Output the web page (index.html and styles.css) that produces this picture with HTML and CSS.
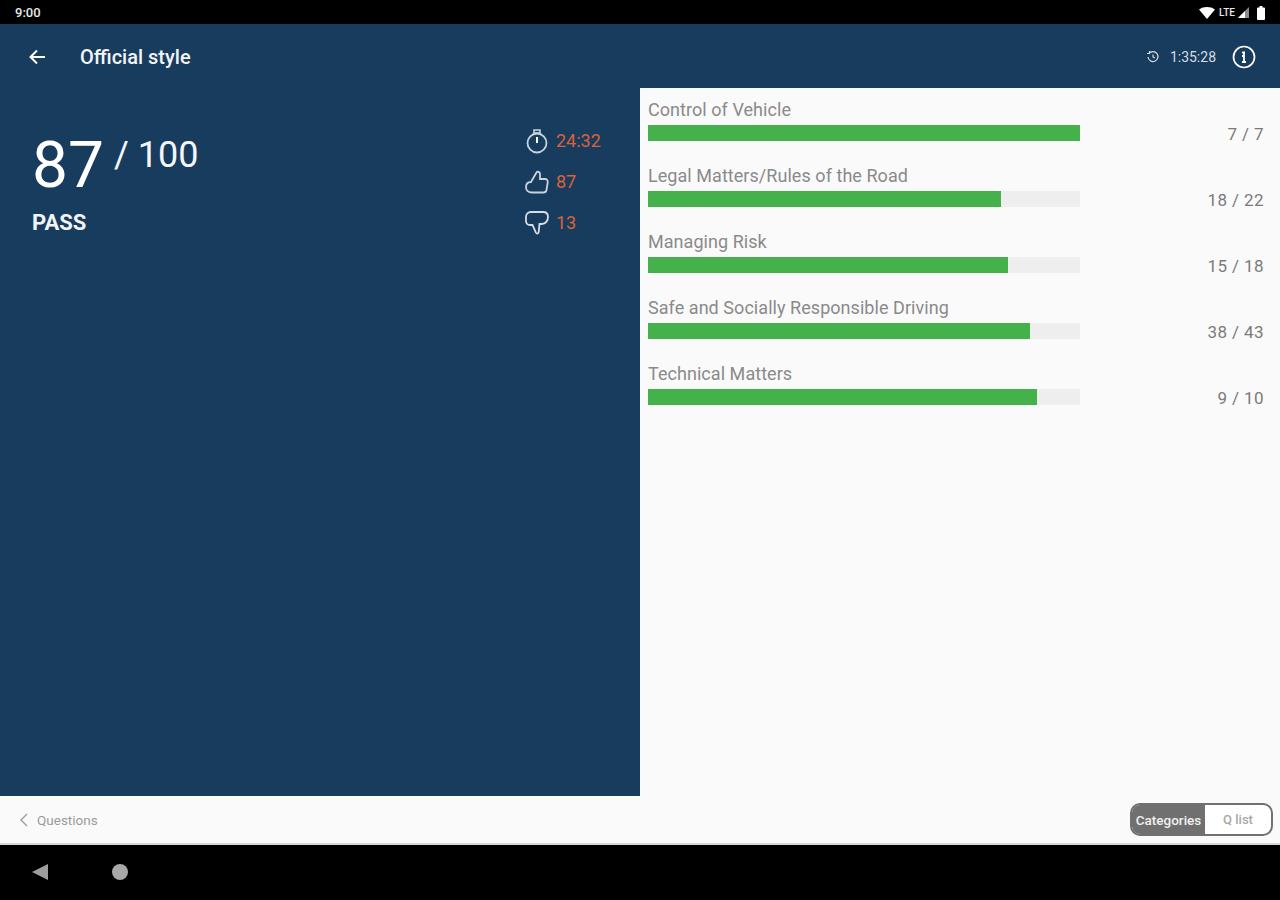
FILE: index.html
```html
<!DOCTYPE html>
<html lang="en">
<head>
<meta charset="utf-8">
<title>Official style</title>
<link rel="stylesheet" href="styles.css">
</head>
<body>
<div class="app">
  <div class="status">
    <span class="clock">9:00</span>
    <div class="status-icons">
      <svg class="wifi" width="16" height="12" viewBox="0 0 16 12"><path d="M0 2.500C4.500-.8 11.500-.8 16 2.500L8 12z" fill="#fff"/></svg>
      <span class="lte">LTE</span>
      <svg width="11" height="11" viewBox="0 0 11 11"><path d="M11 0V11H0z" fill="#fff" opacity=".55"/><path d="M7 4V11H0z" fill="#fff"/></svg>
      <svg class="batt" width="8" height="14" viewBox="0 0 8 14"><path d="M2.500 0h3v1.500H7a1 1 0 0 1 1 1V13a1 1 0 0 1-1 1H1a1 1 0 0 1-1-1V2.500a1 1 0 0 1 1-1h1.500z" fill="#fff"/></svg>
    </div>
  </div>
  <header class="topbar">
    <svg class="back" width="18" height="18" viewBox="0 0 18 18"><path d="M17 9H3M9 2.500 2.500 9 9 15.500" fill="none" stroke="#fff" stroke-width="2"/></svg>
    <h1 class="title">Official style</h1>
    <div class="top-right">
      <svg class="hist" width="14" height="14" viewBox="0 0 14 14"><path d="M3 3.500A5 5 0 1 1 2 7M1 3.500h2.500V1M7 4.500V7l2 1" fill="none" stroke="#d5dde5" stroke-width="1.200"/></svg>
      <span class="elapsed">1:35:28</span>
      <svg class="info" width="24" height="24" viewBox="0 0 24 24"><circle cx="12" cy="12" r="10.500" fill="none" stroke="#fff" stroke-width="1.700"/><path d="M10 7.500h3M12 7.500V17M10 17h4M10 11h2" fill="none" stroke="#fff" stroke-width="1.800"/></svg>
    </div>
  </header>
  <main class="content">
    <section class="summary">
      <div class="score">
        <div class="score-line"><span class="score-big">87</span><span class="score-total">/ 100</span></div>
        <div class="verdict">PASS</div>
      </div>
      <div class="stats">
        <div class="stat">
          <svg width="24" height="26" viewBox="0 0 24 26"><circle cx="12" cy="15" r="9.500" fill="none" stroke="#c9d3dc" stroke-width="1.800"/><path d="M9 2h6v3H9z" fill="none" stroke="#c9d3dc" stroke-width="1.600"/><path d="M12 9v6" stroke="#fff" stroke-width="2"/></svg>
          <span>24:32</span>
        </div>
        <div class="stat">
          <svg width="24" height="26" viewBox="0 0 24 26"><path d="M6 13 11.500 3.500c.8-1.300 3.500-1 3.500 1.500v5h5c2 0 3 1.500 2.700 3.500l-1.200 7.500c-.3 1.500-1.300 2.500-3 2.500H7c-3.500 0-6-2-6-5.200S3 13 6 13z" fill="none" stroke="#c9d3dc" stroke-width="1.800"/></svg>
          <span>87</span>
        </div>
        <div class="stat">
          <svg width="24" height="26" viewBox="0 0 24 26"><path d="M6 2h12c3 0 5 2 5 5s-2 7-6 7h-2.500l-.8 8c-.2 1.800-2 2-2.800.6L7.500 15H5c-2.500 0-4-1.500-4-4V7c0-3 2-5 5-5z" fill="none" stroke="#d5dde5" stroke-width="1.800"/></svg>
          <span>13</span>
        </div>
      </div>
    </section>
    <section class="cats">
      <div class="row"><div class="row-main"><div class="label">Control of Vehicle</div><div class="track"><div class="fill" style="width:100%"></div></div></div><div class="count">7 / 7</div></div>
      <div class="row"><div class="row-main"><div class="label">Legal Matters/Rules of the Road</div><div class="track"><div class="fill" style="width:81.800%"></div></div></div><div class="count">18 / 22</div></div>
      <div class="row"><div class="row-main"><div class="label">Managing Risk</div><div class="track"><div class="fill" style="width:83.400%"></div></div></div><div class="count">15 / 18</div></div>
      <div class="row"><div class="row-main"><div class="label">Safe and Socially Responsible Driving</div><div class="track"><div class="fill" style="width:88.400%"></div></div></div><div class="count">38 / 43</div></div>
      <div class="row"><div class="row-main"><div class="label">Technical Matters</div><div class="track"><div class="fill" style="width:90%"></div></div></div><div class="count">9 / 10</div></div>
    </section>
  </main>
  <footer class="bottom">
    <div class="questions">
      <svg width="10" height="14" viewBox="0 0 10 14"><path d="M8 1 2 7l6 6" fill="none" stroke="#9a9a9a" stroke-width="1.300"/></svg>
      <span>Questions</span>
    </div>
    <div class="toggle">
      <span class="seg seg-on">Categories</span>
      <span class="seg">Q list</span>
    </div>
  </footer>
  <nav class="navbar">
    <svg width="16" height="16" viewBox="0 0 16 16"><path d="M16 0V16L0 8z" fill="#9e9e9e"/></svg>
    <svg width="16" height="16" viewBox="0 0 16 16"><circle cx="8" cy="8" r="8" fill="#a8a8a8"/></svg>
  </nav>
</div>
</body>
</html>
```
FILE: styles.css
```css
* { box-sizing: border-box; }
html, body { margin: 0; padding: 0; }
body { font-family: Roboto, "Liberation Sans", sans-serif; background: #000; }
.app { width: 1280px; height: 900px; display: flex; flex-direction: column; overflow: hidden; }

.status { height: 24px; background: #000; color: #fff; display: flex; align-items: center; justify-content: space-between; padding: 1px 15px 0; }
.clock { font-size: 13px; font-weight: 500; color: #e8e8e8; }
.status-icons { display: flex; align-items: center; gap: 3px; }
.lte { font-size: 10px; font-weight: 500; color: #e8e8e8; }
.wifi { margin-right: 1px; }
.batt { margin-left: 5px; }

.topbar { height: 64px; background: #183c5e; display: flex; align-items: center; padding: 2px 24px 0 28px; color: #fff; }
.back { flex: none; }
.title { margin: 0 0 0 34px; font-size: 20px; font-weight: 500; color: #f2f4f6; }
.top-right { margin-left: auto; display: flex; align-items: center; }
.hist { margin-right: 10px; }
.elapsed { font-size: 14px; color: #d5dde5; margin-right: 16px; }

.content { height: 708px; display: flex; }
.summary { width: 640px; background: #183c5e; display: flex; justify-content: space-between; padding: 40px 39px 0 32px; }
.score-line { display: flex; align-items: flex-start; }
.score-big { font-size: 64px; line-height: 76px; color: #fff; }
.score-total { font-size: 36px; line-height: 54px; color: #f4f6f8; margin-left: 10px; }
.verdict { font-size: 22px; font-weight: 700; color: #f2f4f6; line-height: 25px; margin-top: 6px; }
.stats { display: flex; flex-direction: column; gap: 14px; margin-top: -1px; width: 76px; }
.stat { display: flex; align-items: center; gap: 7px; height: 27px; color: #d8623a; font-size: 18px; }
.stat svg { flex: none; }

.cats { width: 640px; background: #fafafa; padding: 10px 16px 0 8px; display: flex; flex-direction: column; gap: 16px; }
.row { display: flex; height: 50px; }
.row-main { width: 432px; }
.label { font-size: 18px; line-height: 23px; color: #8a8a8a; letter-spacing: .05px; }
.track { height: 16px; margin-top: 4px; background: #eeeeee; }
.fill { height: 100%; background: #44b14b; }
.count { margin-left: auto; align-self: flex-end; font-size: 17px; line-height: 20px; color: #7a7a7a; padding-bottom: 4px; letter-spacing: .4px; }

.bottom { height: 49px; background: #fafafa; border-bottom: 2px solid #d8d8d8; display: flex; align-items: center; justify-content: space-between; padding: 0 7px 0 19px; }
.questions { display: flex; align-items: center; gap: 8px; font-size: 13.500px; color: #9a9a9a; }
.toggle { width: 143px; height: 33px; border: 2px solid #707070; border-radius: 10px; display: flex; overflow: hidden; background: #fff; }
.seg { display: flex; align-items: center; justify-content: center; flex: 1; font-size: 13px; font-weight: 500; color: #a8a8a8; }
.seg-on { flex: none; width: 73px; background: #707070; color: #f0f0f0; font-size: 13.500px; white-space: nowrap; }

.navbar { flex: 1; background: #000; display: flex; align-items: center; gap: 64px; padding: 0 0 1px 32px; }
```
